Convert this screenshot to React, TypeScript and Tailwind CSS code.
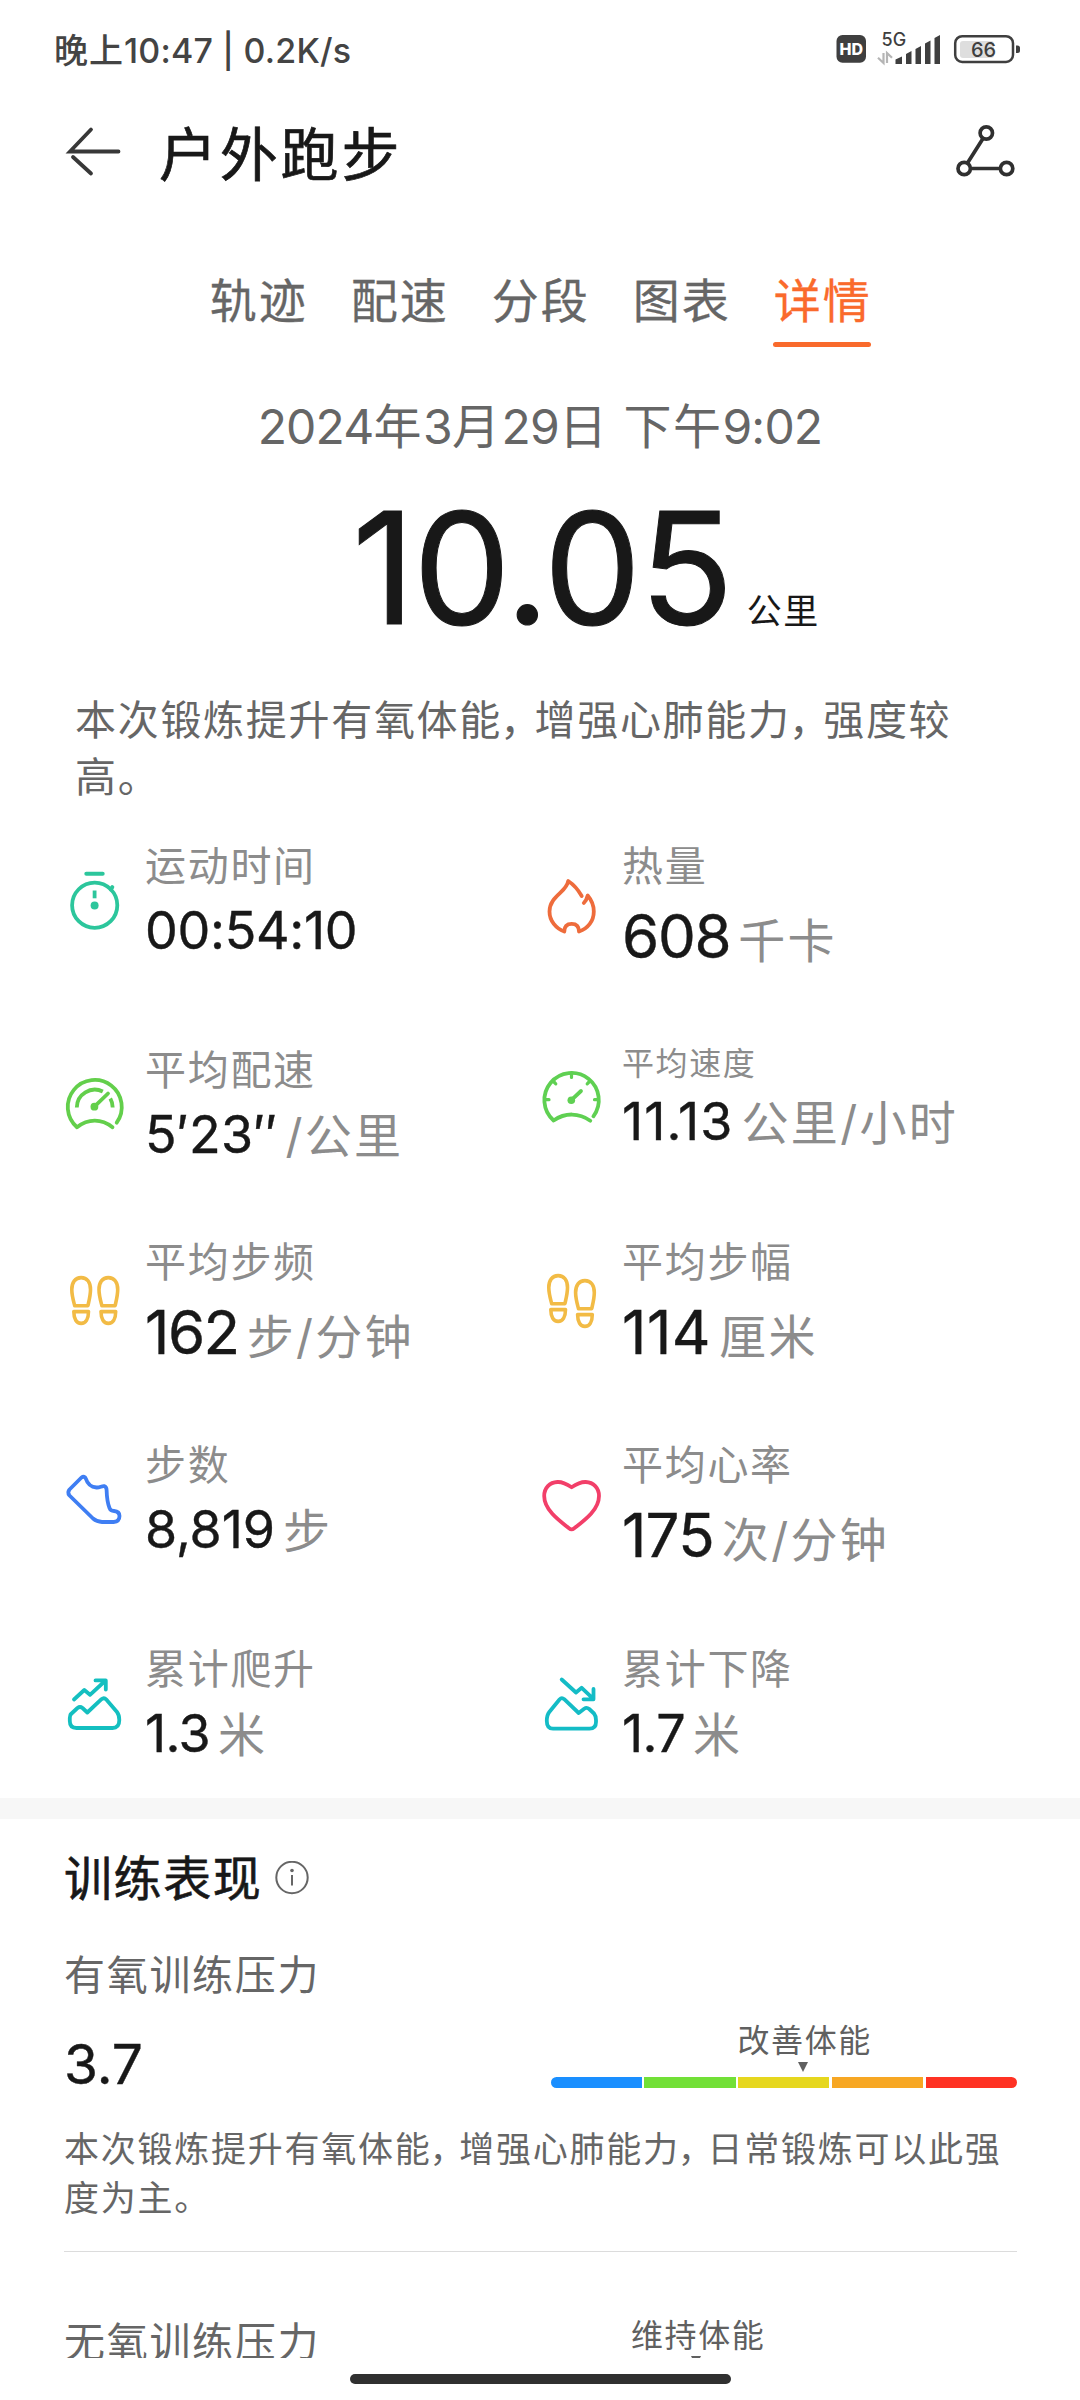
import type { ReactNode } from "react";

const SANS = "font-['Inter','Noto_Sans_CJK_SC',sans-serif]";

/** Splits a string into CJK and Latin runs so that each gets its own tracking. */
function Mixed({ text, latin, comma }: { text: string; latin?: string; comma?: string }) {
  const runs = text.split(/([0-9:.]+|，)/).filter(Boolean);
  return (
    <>
      {runs.map((run, i) => {
        if (run === "，") return <span key={i} className={comma}>{run}</span>;
        if (/^[0-9:.]+$/.test(run)) return <span key={i} className={latin}>{run}</span>;
        return <span key={i}>{run}</span>;
      })}
    </>
  );
}

function Icon({ x, y, color, children }: { x: number; y: number; color: string; children: ReactNode }) {
  return (
    <svg
      className="mt-5 h-20 w-20 shrink-0"
      viewBox={`${x} ${y} 80 80`}
      fill="none"
      stroke={color}
      strokeWidth="3.8"
      strokeLinecap="round"
      strokeLinejoin="round"
    >
      {children}
    </svg>
  );
}

const Stopwatch = (
  <Icon x={54} y={862} color="#2cc69c">
    <circle cx="94.7" cy="905.2" r="22.6" />
    <path d="M86.3 873.8H102.7M110.8 889.5L112.3 887.2" strokeWidth="4" />
    <path d="M94.6 890.5V898.3" strokeLinecap="butt" />
    <circle cx="94.6" cy="905.4" r="4" fill="#2cc69c" stroke="none" />
  </Icon>
);

const Flame = (
  <Icon x={531} y={862} color="#ee6c3c">
    <path d="M581.7 896C578 889.500 573.500 884.500 568.200 881C567 892 549.500 896 549.500 911.500C549.500 921 556 928.500 564.300 931.500C564.300 926.500 567 923.800 571.700 923.800C576.300 923.800 579 926.500 579 931.500C588 928.500 593.800 921 593.800 911.500C593.800 905 591.500 900 587.700 895.500C587 898.500 585.800 901 583.800 903" />
  </Icon>
);

const Pace = (
  <Icon x={54} y={1066} color="#63cf4b">
    <path d="M116.700 1122.700A27 27 0 1 0 77 1127.300C88 1118.500 101.500 1118.500 112.500 1127.200" />
    <path d="M76.800 1107.500A18 18 0 0 1 102.800 1091.500M110.300 1098.500A18 18 0 0 1 112.700 1107.500" strokeLinecap="butt" />
    <path d="M94.400 1106.700L108 1093.500" />
    <circle cx="94.400" cy="1106.700" r="3.900" fill="#63cf4b" stroke="none" />
  </Icon>
);

const Speed = (
  <Icon x={531} y={1066} color="#5fd052">
    <path d="M593.400 1116.300A27.200 27.200 0 1 0 553.600 1120.500C565 1112.500 579 1112.500 590.300 1120.700" />
    <path d="M571.500 1073V1077.500M554 1082L555.800 1083.800M589 1082L587.200 1083.800M545 1099.700H549M598 1099.700H594.500" strokeWidth="3.200" />
    <path d="M571.300 1100.200L581 1091" />
    <circle cx="571.300" cy="1100.200" r="3.800" fill="#5fd052" stroke="none" />
  </Icon>
);

function Foot({ x, y }: { x: number; y: number }) {
  return (
    <g transform={`translate(${x} ${y})`} strokeWidth="3.600">
      <path d="M4.500 29.700C3 24 1.600 19.500 1.600 13.500C1.600 6.500 5 1.600 10.900 1.600C16.800 1.600 20.300 6.500 20.300 13.500C20.300 19.500 19 24 17.700 29.700Z" />
      <path d="M3.600 35.600H18.300C18.300 43 15.500 47.400 10.900 47.400C6.300 47.400 3.600 43 3.600 35.600Z" />
    </g>
  );
}

const Cadence = (
  <Icon x={54} y={1258} color="#f2bb45">
    <Foot x={70.2} y={1276} />
    <Foot x={97.4} y={1276} />
  </Icon>
);

const Stride = (
  <Icon x={531} y={1258} color="#f2bb45">
    <Foot x={547.2} y={1274} />
    <Foot x={574} y={1279} />
  </Icon>
);

const Shoe = (
  <Icon x={54} y={1461} color="#3f7ef3">
    <path d="M69.500 1489.500L81.500 1477.500Q84.500 1475.500 86 1479C87.500 1484 91.500 1487 96.500 1487.500C100 1487.800 102 1485.500 104.500 1486.200Q106.500 1487 106.600 1490C106.800 1497 107.500 1503 109.500 1508Q110.500 1511 114 1511Q119.500 1511.500 119.500 1516Q119.500 1521.500 113.500 1522H102Q97 1521.800 93 1518.500L69.500 1495.500Q67 1492.500 69.500 1489.500Z" />
  </Icon>
);

const Heart = (
  <Icon x={531} y={1461} color="#f23f69">
    <path d="M571.600 1487.300C566 1483.500 562 1481.800 557.500 1482C549.500 1482.400 544.200 1488 544.200 1496C544.200 1509 557 1519 569 1528.300Q571.600 1530.400 574.200 1528.300C586.500 1519 599 1509 599 1496C599 1488 593.500 1482.400 585.700 1482C581.200 1481.800 577.200 1483.500 571.600 1487.300Z" />
  </Icon>
);

const Climb = (
  <Icon x={54} y={1665} color="#14bfc0">
    <path d="M70.500 1714.500L77.500 1708Q80 1706 82.500 1708L87.300 1712.500L101.500 1699.200Q104 1697 106.300 1699.500L117 1712Q119.300 1715 119.300 1720Q119.300 1728 112.500 1728H76.500Q69.800 1728 69.800 1721V1718Q69.800 1715.500 71 1714.200" />
    <path d="M74 1699.500L84.300 1690L90 1694.800L105 1681M95.500 1680.400H105.800V1689.500" />
  </Icon>
);

const Descent = (
  <Icon x={531} y={1665} color="#14bcc6">
    <path d="M559.500 1699.500Q561.700 1697 564.200 1699.200L578.700 1713L584.200 1708.700Q586.700 1707 589.200 1709L594 1713.500Q596 1716 596 1720V1722Q596 1728.700 589.500 1728.700H553Q546.800 1728.700 546.800 1721Q546.800 1715 549.300 1712Z" />
    <path d="M561.700 1679.500L576 1692.500L581.700 1687.800L593.300 1698.800M583.500 1699.300H593.500V1689" />
  </Icon>
);

type Metric = {
  label: string;
  value: string;
  unit?: string;
  icon: ReactNode;
  large?: boolean;
  smallLabel?: boolean;
  track: string;
};

const METRICS: Metric[] = [
  { label: "运动时间", value: "00:54:10", icon: Stopwatch, track: "tracking-[-0.300px]" },
  { label: "热量", value: "608", unit: "千卡", icon: Flame, large: true, track: "tracking-[-1.300px]" },
  { label: "平均配速", value: "5′23′′", unit: "/公里", icon: Pace, track: "tracking-[0.400px]" },
  { label: "平均速度", value: "11.13", unit: "公里/小时", icon: Speed, smallLabel: true, track: "tracking-[1.100px]" },
  { label: "平均步频", value: "162", unit: "步/分钟", icon: Cadence, large: true, track: "tracking-[-1.500px]" },
  { label: "平均步幅", value: "114", unit: "厘米", icon: Stride, large: true, track: "tracking-[0.500px]" },
  { label: "步数", value: "8,819", unit: "步", icon: Shoe, track: "tracking-[-0.100px]" },
  { label: "平均心率", value: "175", unit: "次/分钟", icon: Heart, large: true, track: "tracking-[-0.800px]" },
  { label: "累计爬升", value: "1.3", unit: "米", icon: Climb, track: "tracking-[-0.600px]" },
  { label: "累计下降", value: "1.7", unit: "米", icon: Descent, track: "tracking-[-0.600px]" },
];

function MetricCell({ m }: { m: Metric }) {
  return (
    <div className="flex items-start">
      {m.icon}
      <div className="ml-[11px] whitespace-nowrap">
        <div
          className={
            m.smallLabel
              ? "h-9 text-[32px] leading-[36px] tracking-[1.600px] text-[#8c8c8c]"
              : "h-12 text-[41px] leading-[48px] tracking-[1.700px] text-[#8c8c8c]"
          }
        >
          {m.label}
        </div>
        <div
          className={
            m.large
              ? "h-[92px] text-[60px] leading-[92px] text-[#181818]"
              : m.smallLabel
                ? "h-20 text-[52px] leading-[80px] text-[#181818]"
                : "h-20 text-[52px] leading-[82px] text-[#181818]"
          }
        >
          <span className={`[-webkit-text-stroke:0.4px_#181818] ${m.track}`}>{m.value}</span>
          {m.unit && (
            <span className="ml-2 text-[47px] leading-none tracking-[2.300px] text-[#8c8c8c]">{m.unit}</span>
          )}
        </div>
      </div>
    </div>
  );
}

function StatusBar() {
  return (
    <div className="flex h-[100px] items-start justify-between pl-[54px] pr-[59px]">
      <div className="mt-[31px] whitespace-nowrap text-[34px] font-medium leading-[40px] text-[#444]">
        <span className="tracking-[1px]">晚上</span>
        <span className="tracking-[0.200px]">10:47 | 0.2K/s</span>
      </div>
      <svg className="mt-[30px] h-[40px] w-[186px]" viewBox="835 30 186 40" fill="#3f3f3f">
        <rect x="836.500" y="35" width="29.500" height="27.700" rx="6" />
        <text x="851.200" y="54.700" textAnchor="middle" fontSize="16" fontWeight="800" fill="#fff">HD</text>
        <text x="881.500" y="46" fontSize="18" fontWeight="500">5G</text>
        <path d="M883.500 53V63L878 57.800M887 63V53L892 57.800" stroke="#b5b5b5" strokeWidth="2.200" fill="none" />
        <path d="M895.500 64V59.500L902 56.500V64ZM906 64V54L911.500 51V64ZM915.500 64V49L921 46V64ZM925 64V43.500L930.500 40.500V64ZM934.500 64V38L940 35V64Z" />
        <rect x="960" y="41" width="34" height="17" rx="3" fill="#dedede" />
        <rect x="955.200" y="36.200" width="57.800" height="25.800" rx="7" fill="none" stroke="#3f3f3f" strokeWidth="2.500" />
        <path d="M1016 45.500H1017.500Q1020 45.500 1020 48V50.500Q1020 53 1017.500 53H1016Z" />
        <text x="983.500" y="56.800" textAnchor="middle" fontSize="20" fontWeight="500">66</text>
      </svg>
    </div>
  );
}

function Header() {
  return (
    <div className="flex h-[110px] items-center pl-[60px] pr-[60px]">
      <svg className="h-[60px] w-[70px]" viewBox="60 125 70 60" fill="none" stroke="#383838" strokeWidth="3.800" strokeLinecap="round">
        <path d="M118.500 151.500H70L91 129.500M73 157L91 173.500" />
      </svg>
      <h1 className="ml-[29px] text-[58px] leading-[110px] tracking-[2.800px] text-[#181818] [-webkit-text-stroke:0.7px_#181818]">
        户外跑步
      </h1>
      <svg className="ml-auto h-[70px] w-[70px]" viewBox="950 120 70 70" fill="none" stroke="#303030" strokeWidth="3.700">
        <circle cx="986.300" cy="133" r="6.200" />
        <circle cx="964.200" cy="168.500" r="6.200" />
        <circle cx="1006.600" cy="168.500" r="6.200" />
        <path d="M983 138.500L967.500 163M970.500 168.500H1000.500" />
      </svg>
    </div>
  );
}

const TABS = ["轨迹", "配速", "分段", "图表", "详情"];
const ZONES = ["bg-[#1a8fff]", "bg-[#72e037]", "bg-[#e6d71e]", "bg-[#f7a723]", "bg-[#ff3223]"];

export default function App() {
  return (
    <div className={`flex h-[2400px] w-[1080px] flex-col overflow-hidden bg-white ${SANS}`}>
      <StatusBar />
      <Header />

      <nav className="mt-[62px] flex justify-center gap-[42.500px]">
        {TABS.map((t) => (
          <div
            key={t}
            className={`flex h-[75px] w-[98.500px] flex-col whitespace-nowrap text-[47px] leading-[57px] tracking-[1.900px] [-webkit-text-stroke:0.3px] ${
              t === "详情" ? "text-[#fa6a2c]" : "text-[#666]"
            }`}
          >
            <span className="pl-px">{t}</span>
            {t === "详情" && <span className="mt-auto h-[5px] w-full rounded-full bg-[#f96a2c]" />}
          </div>
        ))}
      </nav>

      <div className="mt-[50px] h-[60px] whitespace-nowrap text-center text-[48px] leading-[60px] tracking-[1.500px] text-[#666]">
        <Mixed text="2024年3月29日 下午9:02" latin="tracking-[-0.800px]" />
      </div>

      <div className="mt-[30px] flex h-[205px] whitespace-nowrap pl-[352px] text-[#181818]">
        <span className="text-[155px] leading-[161px] tracking-[-2px] [-webkit-text-stroke:1px_#181818]">10.05</span>
        <span className="mt-[99px] pl-[15px] text-[35px] leading-[50px] tracking-[1.500px]">公里</span>
      </div>

      <p className="h-[150px] pl-[75px] text-[41px] leading-[57px] tracking-[1.700px] text-[#666]">
        <Mixed text="本次锻炼提升有氧体能，增强心肺能力，强度较" comma="-ml-[2px] tracking-[-6.500px]" />
        <br />
        高。
      </p>

      <section className="grid h-[956px] shrink-0 grid-cols-[477px_1fr] grid-rows-[204px_192px_203px_204px_128px] pl-[54px]">
        {METRICS.map((m) => (
          <MetricCell key={m.label} m={m} />
        ))}
      </section>

      <div className="h-[21px] shrink-0 bg-[#f7f7f7]" />

      <section className="flex h-[539px] shrink-0 flex-col overflow-hidden pl-[64px] pr-[63px]">
        <div className="mt-[30px] flex h-[60px] items-center">
          <h2 className="text-[48px] leading-[60px] tracking-[1.600px] text-[#181818] [-webkit-text-stroke:0.6px_#181818]">
            训练表现
          </h2>
          <svg className="ml-[13px] h-9 w-9" viewBox="0 0 36 36" fill="none" stroke="#666" strokeWidth="2">
            <circle cx="17" cy="16.500" r="15.700" />
            <path d="M17 14V24.500" />
            <circle cx="17" cy="9.500" r="1.800" fill="#666" stroke="none" />
          </svg>
        </div>

        <div className="mt-[42px] h-12 text-[41px] leading-[48px] tracking-[1.700px] text-[#666]">有氧训练压力</div>

        <div className="mt-[19px] flex h-[90px] justify-between">
          <div className="mt-[6px] text-[55px] leading-[80px] text-[#181818] [-webkit-text-stroke:0.4px_#181818]">3.7</div>
          <div className="mt-[2px] flex w-[466.500px] flex-col">
            <div className="h-10 pl-[187px] text-[32px] leading-[41px] tracking-[1.600px] text-[#606060]">改善体能</div>
            <svg className="ml-[247px] mt-[2px] h-[10px] w-[10px] shrink-0" viewBox="0 0 10 10">
              <path d="M0 0H10L5 10Z" fill="#606060" />
            </svg>
            <div className="mt-[5px] flex h-[11px] gap-[2.500px] overflow-hidden rounded-full">
              {ZONES.map((z) => (
                <span key={z} className={`flex-1 ${z}`} />
              ))}
            </div>
          </div>
        </div>

        <p className="mt-[17px] h-[98px] whitespace-nowrap text-[35px] leading-[49px] tracking-[1.750px] text-[#666]">
          <Mixed
            text="本次锻炼提升有氧体能，增强心肺能力，日常锻炼可以此强"
            comma="-ml-[2px] tracking-[-5.300px]"
          />
          <br />
          度为主。
        </p>

        <div className="mt-[28px] h-px bg-[#dcdcdc]" />

        <div className="flex h-[106px] shrink-0 overflow-hidden">
          <div className="mt-[66px] w-[567px] whitespace-nowrap text-[41px] leading-[48px] tracking-[1.700px] text-[#666]">
            无氧训练压力
          </div>
          <div className="mt-[63px] flex flex-col whitespace-nowrap">
            <div className="h-10 shrink-0 text-[32px] leading-[41px] tracking-[1.600px] text-[#606060]">维持体能</div>
            <svg className="ml-[60px] mt-px h-[10px] w-[10px] shrink-0" viewBox="0 0 10 10">
              <path d="M0 0H10L5 10Z" fill="#606060" />
            </svg>
          </div>
        </div>
      </section>

      <div className="mt-auto flex h-[26px] shrink-0 justify-center">
        <div className="h-[10px] w-[381px] rounded-full bg-[#303030]" />
      </div>
    </div>
  );
}
